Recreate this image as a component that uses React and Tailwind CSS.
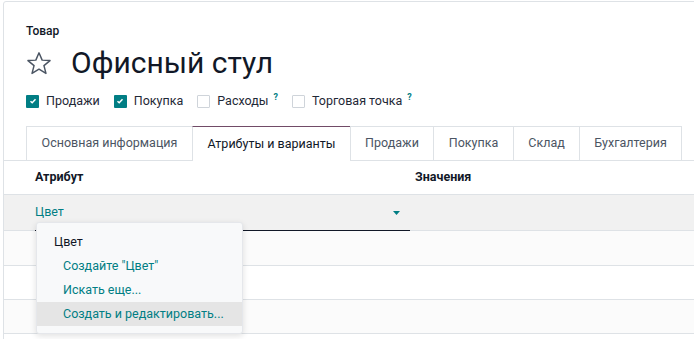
import React from "react";

const tabs = [
    { id: "main", label: "Основная информация", w: "w-[166px]" },
    { id: "attrs", label: "Атрибуты и варианты", w: "w-[158px]" },
    { id: "sales", label: "Продажи", w: "w-[83px]" },
    { id: "purchase", label: "Покупка", w: "w-[80px]" },
    { id: "stock", label: "Склад", w: "w-[66px]" },
    { id: "acc", label: "Бухгалтерия", w: "w-[103px]" },
];

const flags = [
    { label: "Продажи", checked: true },
    { label: "Покупка", checked: true },
    { label: "Расходы", checked: false, help: true },
    { label: "Торговая точка", checked: false, help: true },
];

function Checkbox({ checked }) {
    return checked ? (
        <span className="w-[13px] h-[13px] bg-[#017e84] flex items-center justify-center rounded-[1px]">
            <svg width="8" height="8" viewBox="0 0 8 8">
                <path d="M1.5 4.2 L3.2 5.8 L6.5 2.3" stroke="white" strokeWidth="1.5" fill="none" />
            </svg>
        </span>
    ) : (
        <span className="w-[13px] h-[13px] border border-[#cfd4da] bg-white rounded-[1px]" />
    );
}

export default function App() {
    const activeTab = "attrs";

    return (
        <div className="w-[694px] h-[339px] overflow-hidden bg-white pl-[3px] pt-[1px] font-['Roboto',sans-serif] text-[12.5px] text-[#374151]">
            <div className="relative w-[720px] h-[360px] border border-[#dee2e6] rounded-[3px] bg-white">
                {/* Header */}
                <div className="pl-[22px] pt-[22px]">
                    <div className="text-[12px] font-medium text-[#111827] leading-[14px]">Товар</div>
                    <div className="flex items-center h-[38px] mt-[6px]">
                        <svg width="28" height="27" viewBox="0 0 24 24" className="ml-[-1px]">
                            <path
                                d="M12 2.5 L14.8 9 L21.8 9.4 L16.4 13.9 L18.2 20.8 L12 17 L5.8 20.8 L7.6 13.9 L2.2 9.4 L9.2 9 Z"
                                fill="none"
                                stroke="#4b5563"
                                strokeWidth="1.3"
                                strokeLinejoin="round"
                            />
                        </svg>
                        <h1 className="ml-[18px] text-[30px] leading-none text-[#111827]">Офисный стул</h1>
                    </div>
                    <div className="flex items-center h-[20px] mt-[9px] gap-[14px]">
                        {flags.map(f => (
                            <label key={f.label} className="flex items-center gap-[7px]">
                                <Checkbox checked={f.checked} />
                                <span className="text-[#1f2937]">
                                    {f.label}
                                    {f.help && <sup className="ml-[5px] text-[9px] text-[#017e84] font-bold">?</sup>}
                                </span>
                            </label>
                        ))}
                    </div>
                </div>

                {/* Tabs */}
                <div className="mt-[15px] flex pl-[22px] border-b border-[#dee2e6] h-[35px]">
                    {tabs.map(tab => (
                        <div
                            key={tab.id}
                            className={`${tab.w} flex items-center justify-center border-t border-l border-[#dee2e6] last:border-r ${
                                activeTab === tab.id
                                    ? "bg-white border-t-[#714b67] mb-[-1px] text-[#111827]"
                                    : "text-[#4b5563]"
                            }`}
                        >
                            {tab.label}
                        </div>
                    ))}
                </div>

                {/* Table */}
                <div className="w-[691px]">
                    <div className="flex h-[34px] items-center border-b border-[#dee2e6] font-bold text-[#111827]">
                        <div className="w-[406px] pl-[31px]">Атрибут</div>
                        <div className="pl-[5px]">Значения</div>
                    </div>
                    <div className="flex h-[36px] bg-[#f1f1f1] border-b border-[#dee2e6]">
                        <div className="w-[406px] pl-[31px] flex">
                            <div className="flex-1 flex items-center justify-between border-b border-[#111827] mb-[-1px] text-[#017e84]">
                                <span>Цвет</span>
                                <svg width="7" height="4" viewBox="0 0 7 4" className="mr-[10px] mt-[1px]">
                                    <path d="M0 0 H7 L3.5 4 Z" fill="#017e84" />
                                </svg>
                            </div>
                        </div>
                    </div>
                    <div className="h-[35px] bg-[#fbfbfb] border-b border-[#dee2e6]" />
                    <div className="h-[34px] bg-white border-b border-[#dee2e6]" />
                    <div className="h-[34px] bg-[#fbfbfb] border-b border-[#dee2e6]" />
                </div>

                {/* Autocomplete dropdown */}
                <div className="absolute left-[32px] top-[220px] w-[207px] py-[7px] bg-[#f8f9fa] border border-[#e5e7eb] rounded-[3px] shadow-[0_2px_6px_rgba(0,0,0,0.12)]">
                    <div className="h-[24px] flex items-center pl-[17px] text-[#111827]">Цвет</div>
                    <div className="h-[24px] flex items-center pl-[26px] text-[#017e84]">Создайте "Цвет"</div>
                    <div className="h-[24px] flex items-center pl-[26px] text-[#017e84]">Искать еще...</div>
                    <div className="h-[24px] flex items-center pl-[26px] text-[#017e84] bg-[#e5e5e5]">Создать и редактировать...</div>
                </div>
            </div>
        </div>
    );
}
